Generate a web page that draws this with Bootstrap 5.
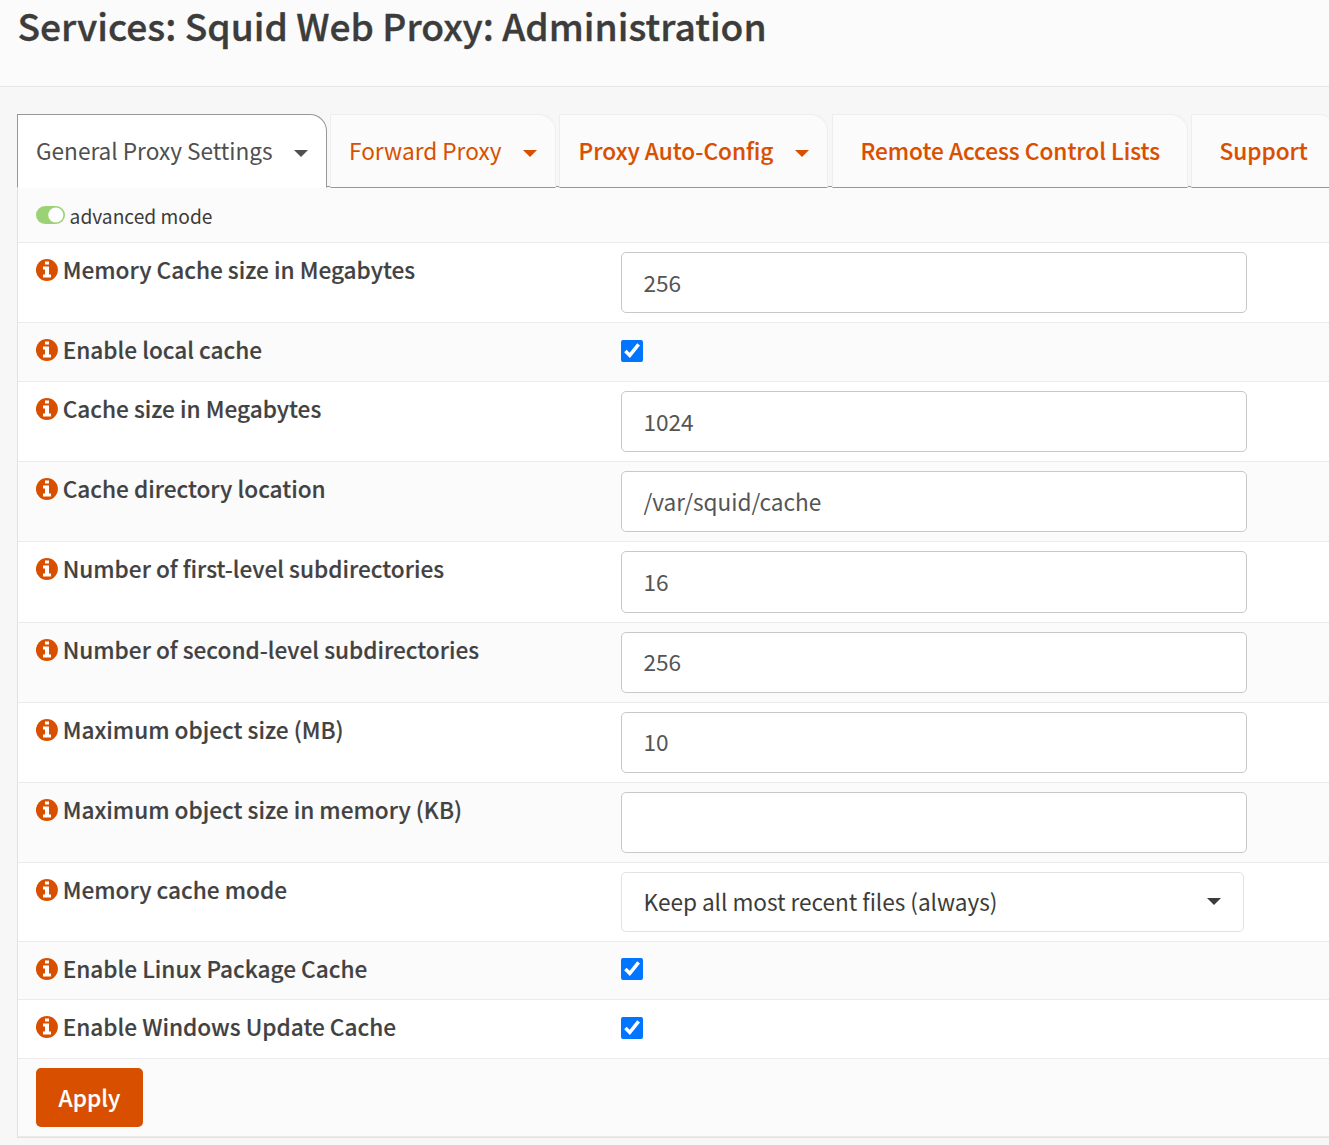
<!DOCTYPE html>
<html lang="en">
<head>
<meta charset="utf-8">
<meta name="viewport" content="width=device-width, initial-scale=1">
<title>Services: Squid Web Proxy: Administration</title>
<link href="https://cdn.jsdelivr.net/npm/bootstrap@5.3.0/dist/css/bootstrap.min.css" rel="stylesheet">
<style>
  :root { --accent: #d94f00; --ink: #3c3c3b; --rule: #ebebeb; }
  body { background: #f7f7f7; color: var(--ink); font-family: "Noto Sans CJK SC", "Noto Sans", sans-serif; font-size: 22.62px; line-height: 34px; overflow: hidden; }
  .page-head { height: 87px; background: #fbfbfb; border-bottom: 1px solid #e5e5e5; padding: 0 0 0 17.4px; }
  .page-head h1 { font-size: 37.2px; font-weight: 500; line-height: 50px; -webkit-text-stroke: .35px; }
  .content-wrap { padding: 27px 0 0 17px; width: 1345px; }

  .proxy-tabs { height: 74px; gap: 3px; border: 0; background: linear-gradient(#979797, #979797) 0 72px / 100% 1px no-repeat; }
  .proxy-tabs .nav-link { height: 74px; padding: 0 0 0 18px; line-height: 72px; color: var(--accent); background: #fbfbfb; border: 1px solid #eee; border-bottom-color: #979797; border-radius: 0 17px 0 0; margin: 0; white-space: nowrap; }
  .proxy-tabs .nav-link.active { color: #4f4f4f; background: #fff; border-color: #979797 #979797 #fff; }
  .tab-general { width: 310px; } .tab-forward { width: 226px; } .proxy-tabs .tab-pac { width: 269px; padding-left: 18.6px; }
  .tab-acl { width: 356px; } .tab-support { width: 145px; }
  .proxy-tabs .tab-wide { padding-left: 27.4px; }
  .arrow { width: 14px; height: 7px; fill: currentColor; flex: none; }
  .tab-arrow { margin: 5px 18px 0 auto; }
  .pac-item { margin-right: 1px; }
  .semi { font-weight: 500; -webkit-text-stroke: .15px; }

  .settings { border: 1px solid #e2e2e2; border-top: 0; background: #fbfbfb; height: 950px; }
  .setting { border-top: 1px solid var(--rule); padding: 9px 0 0 18px; height: 80.2px; }
  .setting:nth-child(even) { background: #fff; }
  .setting.mode-row { height: 54.2px; border-top-color: transparent; padding-top: 0; font-size: 19.2px; line-height: 55px; }
  .setting.short { height: 58.6px; }
  .setting.select-row { height: 78.8px; }
  .setting.action-row { height: 78.8px; border-bottom: 1px solid var(--rule); }
  .label-col { width: 585px; flex: none; line-height: 36px; color: #424242; }
  .info { width: 22px; height: 22px; margin: 7px 4.7px 0 0; display: block; flex: none; }
  .field { width: 626px; height: 61.2px; padding: 0 21.5px 1px; font: inherit; color: #555; border: 1px solid #c8c8c8; border-radius: 5px; letter-spacing: -.02px; }
  .picker { width: 623px; height: 60px; padding: 0 22px 1px 21.5px; letter-spacing: -.03px; background: #fff; color: var(--ink); border: 1px solid #e2e2e2; border-radius: 5px; }
  .tick { width: 22px; height: 22px; margin: 7.3px 0 0; }
  .apply { width: 107px; height: 59px; padding: 0; font-size: 22.68px; line-height: 60px; color: #fff; background: var(--accent); border: 0; border-radius: 5px; }
  .apply.semi { font-weight: 500; }
  .toggle { width: 29px; height: 18px; margin: 0 4.6px 2px 0; }
  .mode-row span { padding-top: 2px; }
</style>
</head>
<body>
<svg class="d-none">
  <symbol id="i-info" viewBox="0 0 22 22"><circle cx="10.9" cy="11" r="11" fill="#d94f00"/><path d="M9 2.4h4v3.2H9zM7 7.4h6v8h2v3.1H7v-3.1h2v-5H7z" fill="#fff"/></symbol>
  <symbol id="i-arrow" viewBox="0 0 14 7"><path d="M0 0h14L7 7z"/></symbol>
</svg>

<header class="page-head"><h1 class="m-0">Services: Squid Web Proxy: Administration</h1></header>

<main class="content-wrap">
  <ul class="nav nav-tabs proxy-tabs flex-nowrap">
    <li class="nav-item"><a class="nav-link active tab-general d-flex align-items-center">General Proxy Settings<svg class="arrow tab-arrow"><use href="#i-arrow"/></svg></a></li>
    <li class="nav-item"><a class="nav-link tab-forward d-flex align-items-center">Forward Proxy<svg class="arrow tab-arrow"><use href="#i-arrow"/></svg></a></li>
    <li class="nav-item pac-item"><a class="nav-link tab-pac semi d-flex align-items-center">Proxy Auto-Config<svg class="arrow tab-arrow"><use href="#i-arrow"/></svg></a></li>
    <li class="nav-item"><a class="nav-link tab-acl tab-wide semi">Remote Access Control Lists</a></li>
    <li class="nav-item"><a class="nav-link tab-support tab-wide semi">Support</a></li>
  </ul>

  <form class="settings">
    <div class="setting mode-row d-flex align-items-center"><svg class="toggle" viewBox="0 0 29 18"><rect width="29" height="18" rx="9" fill="#9bd275"/><circle cx="19.8" cy="9" r="7.6" fill="#fff"/></svg><span>advanced mode</span></div>
    <div class="setting d-flex align-items-start"><div class="label-col semi d-flex"><svg class="info"><use href="#i-info"/></svg>Memory Cache size in Megabytes</div><input class="field" type="text" value="256"></div>
    <div class="setting short d-flex align-items-start"><div class="label-col semi d-flex"><svg class="info"><use href="#i-info"/></svg>Enable local cache</div><input class="tick" type="checkbox" checked></div>
    <div class="setting d-flex align-items-start"><div class="label-col semi d-flex"><svg class="info"><use href="#i-info"/></svg>Cache size in Megabytes</div><input class="field" type="text" value="1024"></div>
    <div class="setting d-flex align-items-start"><div class="label-col semi d-flex"><svg class="info"><use href="#i-info"/></svg>Cache directory location</div><input class="field" type="text" value="/var/squid/cache"></div>
    <div class="setting d-flex align-items-start"><div class="label-col semi d-flex"><svg class="info"><use href="#i-info"/></svg>Number of first-level subdirectories</div><input class="field" type="text" value="16"></div>
    <div class="setting d-flex align-items-start"><div class="label-col semi d-flex"><svg class="info"><use href="#i-info"/></svg>Number of second-level subdirectories</div><input class="field" type="text" value="256"></div>
    <div class="setting d-flex align-items-start"><div class="label-col semi d-flex"><svg class="info"><use href="#i-info"/></svg>Maximum object size (MB)</div><input class="field" type="text" value="10"></div>
    <div class="setting d-flex align-items-start"><div class="label-col semi d-flex"><svg class="info"><use href="#i-info"/></svg>Maximum object size in memory (KB)</div><input class="field" type="text" value=""></div>
    <div class="setting select-row d-flex align-items-start"><div class="label-col semi d-flex"><svg class="info"><use href="#i-info"/></svg>Memory cache mode</div><div class="picker d-flex align-items-center justify-content-between">Keep all most recent files (always)<svg class="arrow"><use href="#i-arrow"/></svg></div></div>
    <div class="setting short d-flex align-items-start"><div class="label-col semi d-flex"><svg class="info"><use href="#i-info"/></svg>Enable Linux Package Cache</div><input class="tick" type="checkbox" checked></div>
    <div class="setting short d-flex align-items-start"><div class="label-col semi d-flex"><svg class="info"><use href="#i-info"/></svg>Enable Windows Update Cache</div><input class="tick" type="checkbox" checked></div>
    <div class="setting action-row"><button class="btn apply semi d-block" type="button">Apply</button></div>
  </form>
</main>
<script src="https://cdn.jsdelivr.net/npm/bootstrap@5.3.0/dist/js/bootstrap.bundle.min.js"></script>
</body>
</html>
